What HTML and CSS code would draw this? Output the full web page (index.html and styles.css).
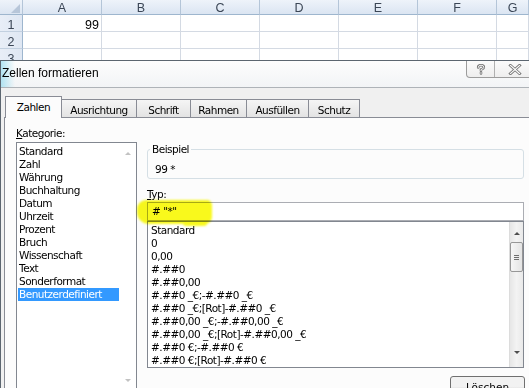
FILE: index.html
```html
<!DOCTYPE html>
<html lang="de">

<head>
    <meta charset="UTF-8">
    <meta name="viewport" content="width=device-width, initial-scale=1.0">
    <title>Zellen formatieren</title>
    <link rel="stylesheet" href="styles.css">
</head>

<body>
    <div class="sheet">
        <div class="sheet-row col-head">
            <div class="corner">
                <svg width="9" height="9" viewBox="0 0 9 9"><polygon points="9,0 9,9 0,9" fill="#b7c6d9" /></svg>
            </div>
            <div class="col">A</div>
            <div class="col">B</div>
            <div class="col">C</div>
            <div class="col">D</div>
            <div class="col">E</div>
            <div class="col">F</div>
            <div class="col">G</div>
        </div>
        <div class="sheet-row">
            <div class="row-num">1</div>
            <div class="cell num">99</div>
            <div class="cell"></div>
            <div class="cell"></div>
            <div class="cell"></div>
            <div class="cell"></div>
            <div class="cell"></div>
            <div class="cell"></div>
        </div>
        <div class="sheet-row">
            <div class="row-num">2</div>
            <div class="cell"></div>
            <div class="cell"></div>
            <div class="cell"></div>
            <div class="cell"></div>
            <div class="cell"></div>
            <div class="cell"></div>
            <div class="cell"></div>
        </div>
        <div class="sheet-row">
            <div class="row-num">3</div>
            <div class="cell"></div>
            <div class="cell"></div>
            <div class="cell"></div>
            <div class="cell"></div>
            <div class="cell"></div>
            <div class="cell"></div>
            <div class="cell"></div>
        </div>
    </div>

    <div class="dialog">
        <div class="titlebar">
            <span class="title">Zellen formatieren</span>
            <div class="caption-buttons">
                <span class="cap-btn help">
                    <svg width="12" height="11" viewBox="0 0 12 11">
                        <path d="M3.2 3.4 Q3.2 1.2 6 1.2 Q8.8 1.2 8.8 3.3 Q8.8 4.7 6 5.6 L6 6.8 M6 8.6 L6 9.4" fill="none" stroke="#777" stroke-width="2.6" stroke-linecap="round" />
                        <path d="M3.2 3.4 Q3.2 1.2 6 1.2 Q8.8 1.2 8.8 3.3 Q8.8 4.7 6 5.6 L6 6.8 M6 8.6 L6 9.4" fill="none" stroke="#fff" stroke-width="0.9" stroke-linecap="round" />
                    </svg>
                </span>
                <span class="cap-btn close">
                    <svg width="14" height="11" viewBox="0 0 14 11">
                        <path d="M2.5 1.5 L11.5 9.5 M11.5 1.5 L2.5 9.5" stroke="#777" stroke-width="3" stroke-linecap="square" />
                        <path d="M2.5 1.5 L11.5 9.5 M11.5 1.5 L2.5 9.5" stroke="#fff" stroke-width="1.1" stroke-linecap="square" />
                    </svg>
                </span>
            </div>
        </div>

        <div class="tabstrip">
            <span class="tab tab-zahlen selected">Zahlen</span>
            <span class="tab tab-ausrichtung">Ausrichtung</span>
            <span class="tab tab-schrift">Schrift</span>
            <span class="tab tab-rahmen">Rahmen</span>
            <span class="tab tab-fuellen">Ausfüllen</span>
            <span class="tab tab-schutz">Schutz</span>
        </div>

        <div class="panel">
            <div class="left-col">
                <div class="label"><u>K</u>ategorie:</div>
                <div class="listbox cat-list">
                    <ul class="items">
                        <li>Standard</li>
                        <li>Zahl</li>
                        <li>Währung</li>
                        <li>Buchhaltung</li>
                        <li>Datum</li>
                        <li>Uhrzeit</li>
                        <li>Prozent</li>
                        <li>Bruch</li>
                        <li>Wissenschaft</li>
                        <li>Text</li>
                        <li>Sonderformat</li>
                        <li class="active">Benutzerdefiniert</li>
                    </ul>
                    <div class="cat-scroll">
                        <span class="arrow up light"></span>
                        <span class="arrow down light"></span>
                    </div>
                </div>
            </div>

            <div class="right-col">
                <fieldset class="sample">
                    <legend>Beispiel</legend>
                    <div>99 *</div>
                </fieldset>

                <div class="label typ-label"><u>T</u>yp:</div>
                <div class="typ-field">
                    <div class="typ-input"># "*"</div>
                    <div class="marker"></div>
                </div>

                <div class="listbox fmt-list">
                    <ul class="items">
                        <li>Standard</li>
                        <li>0</li>
                        <li>0,00</li>
                        <li>#.##0</li>
                        <li>#.##0,00</li>
                        <li>#.##0 _€;-#.##0 _€</li>
                        <li>#.##0 _€;[Rot]-#.##0 _€</li>
                        <li>#.##0,00 _€;-#.##0,00 _€</li>
                        <li>#.##0,00 _€;[Rot]-#.##0,00 _€</li>
                        <li>#.##0 €;-#.##0 €</li>
                        <li>#.##0 €;[Rot]-#.##0 €</li>
                    </ul>
                    <div class="vscroll">
                        <span class="arrow up"></span>
                        <span class="thumb"><i></i><i></i><i></i></span>
                        <span class="arrow down"></span>
                    </div>
                </div>

                <button class="btn">Löschen</button>
            </div>
        </div>
    </div>
</body>

</html>
```

FILE: styles.css
```css
html,
body {
    margin: 0;
    overflow: hidden;
}

body {
    width: 529px;
    height: 388px;
    background: #fff;
    font-family: "DejaVu Sans", Verdana, sans-serif;
    font-size: 10.5px;
    letter-spacing: -0.5px;
    color: #000;
}

/* spreadsheet behind the dialog */
.sheet {
    height: 60px;
    overflow: hidden;
    font-family: "Liberation Sans", Arial, sans-serif;
    font-size: 12.5px;
    letter-spacing: 0;
    color: #333;
}

.sheet-row {
    display: grid;
    grid-template-columns: 23px repeat(6, 79px) 1fr;
}

.col-head > div {
    box-sizing: border-box;
    height: 15px;
    line-height: 17px;
    overflow: hidden;
    text-align: center;
    color: #3b4656;
    background: linear-gradient(#eef3fa, #dbe5f2);
    border-right: 1px solid #b4c5d8;
    border-bottom: 1px solid #9eb6ce;
}

.col-head .corner {
    display: flex;
    justify-content: flex-end;
    align-items: flex-end;
    padding: 0 2px 1px 0;
}

.row-num,
.cell {
    box-sizing: border-box;
    height: 17px;
    line-height: 20px;
    overflow: hidden;
}

.row-num {
    text-align: center;
    color: #3b4656;
    background: linear-gradient(to right, #e8eef7, #dfe7f3);
    border-right: 1px solid #9eb6ce;
    border-bottom: 1px solid #c2d0e0;
}

.cell {
    border-right: 1px solid #d4dae3;
    border-bottom: 1px solid #d4dae3;
}

.cell.num {
    text-align: right;
    padding-right: 2px;
    color: #000;
}

/* dialog window */
.dialog {
    box-sizing: border-box;
    width: 541px;
    height: 328px;
    border: 1px solid #5c6670;
    border-bottom: none;
    background: #f0f0f0;
}

.titlebar {
    display: flex;
    align-items: flex-start;
    height: 26px;
    border-bottom: 1px solid #aeb3b8;
    background:
        linear-gradient(to right, rgba(160, 222, 240, 0.8), rgba(255, 255, 255, 0) 14px),
        linear-gradient(#fdfdfd, #f2f4f6);
}

.title {
    padding: 5px 0 0 1px;
    font-family: "Liberation Sans", Arial, sans-serif;
    font-size: 12px;
    letter-spacing: 0;
    line-height: 15px;
}

.caption-buttons {
    display: flex;
    margin-left: auto;
    margin-right: 4px;
    height: 16px;
    border: 1px solid #9c9c9c;
    border-top: none;
    border-radius: 0 0 4px 4px;
    background: linear-gradient(#fbfbfb, #eeeeee);
}

.cap-btn {
    display: flex;
    justify-content: center;
    align-items: center;
}

.cap-btn.help {
    width: 27px;
    border-right: 1px solid #b0b0b0;
}

.cap-btn.close {
    width: 40px;
}

.tabstrip {
    display: flex;
    align-items: flex-end;
    height: 29px;
    padding-left: 4px;
}

.tab {
    box-sizing: border-box;
    height: 18px;
    margin-left: -1px;
    padding-top: 4px;
    line-height: 13px;
    text-align: center;
    border: 1px solid #898c95;
    border-bottom: none;
    background: linear-gradient(#f5f5f5, #e3e3e3);
}

.tab.selected {
    position: relative;
    z-index: 1;
    height: 22px;
    margin-left: 0;
    margin-bottom: -1px;
    padding-top: 4px;
    background: #fcfcfc;
}

.tab-zahlen { width: 57px; }
.tab-ausrichtung { width: 76px; }
.tab-schrift { width: 55px; }
.tab-rahmen { width: 57px; }
.tab-fuellen { width: 63px; }
.tab-schutz { width: 52px; }

.panel {
    display: flex;
    margin-left: 3px;
    height: 300px;
    padding: 9px 0 0 11px;
    border: 1px solid #898c95;
    background: #fcfcfc;
}

.label {
    line-height: 13px;
}

.left-col {
    width: 121px;
}

.listbox {
    display: flex;
    box-sizing: border-box;
    background: #fff;
    border: 1px solid #828790;
}

.items {
    flex: 1;
    margin: 0;
    padding: 0;
    list-style: none;
    overflow: hidden;
    line-height: 13px;
    white-space: nowrap;
}

.cat-list {
    margin-top: 2px;
    height: 249px;
}

.cat-list .items {
    padding-top: 2px;
}

.cat-list li {
    margin: 0 1px;
    padding-left: 1px;
}

.cat-list li.active {
    background: #3399ff;
    color: #fff;
}

.cat-scroll {
    display: flex;
    flex-direction: column;
    justify-content: space-between;
    align-items: center;
    width: 16px;
    padding: 9px 0 8px;
}

.arrow {
    width: 0;
    height: 0;
    border-left: 3px solid transparent;
    border-right: 3px solid transparent;
}

.arrow.up {
    border-bottom: 3px solid #4e4e4e;
}

.arrow.down {
    border-top: 3px solid #4e4e4e;
}

.arrow.light.up {
    border-bottom-color: #c2c2c2;
}

.arrow.light.down {
    border-top-color: #c2c2c2;
}

.right-col {
    display: flex;
    flex-direction: column;
    width: 377px;
    margin: 16px 0 0 10px;
}

.sample {
    margin: 0;
    padding: 7px 7px 2px;
    border: 1px solid #d5dfe5;
    border-radius: 3px;
    line-height: 13px;
}

.sample legend {
    margin-left: -5px;
    padding: 0 2px;
    line-height: 13px;
}

.typ-label {
    margin-top: 9px;
}

.typ-field {
    position: relative;
    margin-top: 1px;
}

.typ-input {
    box-sizing: border-box;
    height: 19px;
    padding: 2px 4px 0;
    line-height: 13px;
    background: #fff;
    border: 1px solid #abadb3;
}

.marker {
    position: absolute;
    left: -10px;
    top: -2px;
    width: 75px;
    height: 24px;
    border-radius: 9px 5px 7px 12px;
    background: #f9f91c;
    mix-blend-mode: multiply;
    filter: blur(1px);
}

.marker::after {
    content: "";
    position: absolute;
    left: 46px;
    top: 20px;
    width: 24px;
    height: 6px;
    border-radius: 3px;
    background: #f9f91c;
}

.fmt-list {
    height: 147px;
}

.fmt-list .items {
    padding: 2px 0 0 3px;
}

.vscroll {
    display: flex;
    flex-direction: column;
    align-items: center;
    width: 13px;
    border-left: 1px solid #dcdcdc;
    background: linear-gradient(to right, #e6e6e6, #f3f3f3 50%, #e9e9e9);
}

.vscroll .arrow.up {
    margin: 10px 0 7px;
}

.vscroll .arrow.down {
    margin: auto 0 13px;
}

.thumb {
    display: flex;
    flex-direction: column;
    justify-content: center;
    align-items: center;
    gap: 1px;
    box-sizing: border-box;
    width: 13px;
    height: 30px;
    border: 1px solid #979797;
    border-radius: 2px;
    background: linear-gradient(to right, #f6f6f6, #e4e4e4);
}

.thumb i {
    display: block;
    width: 5px;
    height: 1px;
    background: #6f6f6f;
}

.btn {
    align-self: flex-end;
    width: 75px;
    height: 23px;
    margin: 8px -1px 0 0;
    padding: 0;
    font: inherit;
    line-height: 13px;
    border: 1px solid #707070;
    border-radius: 3px;
    background: linear-gradient(#f2f2f2 45%, #e3e3e3 55%, #dcdcdc);
    color: #000;
}
```
